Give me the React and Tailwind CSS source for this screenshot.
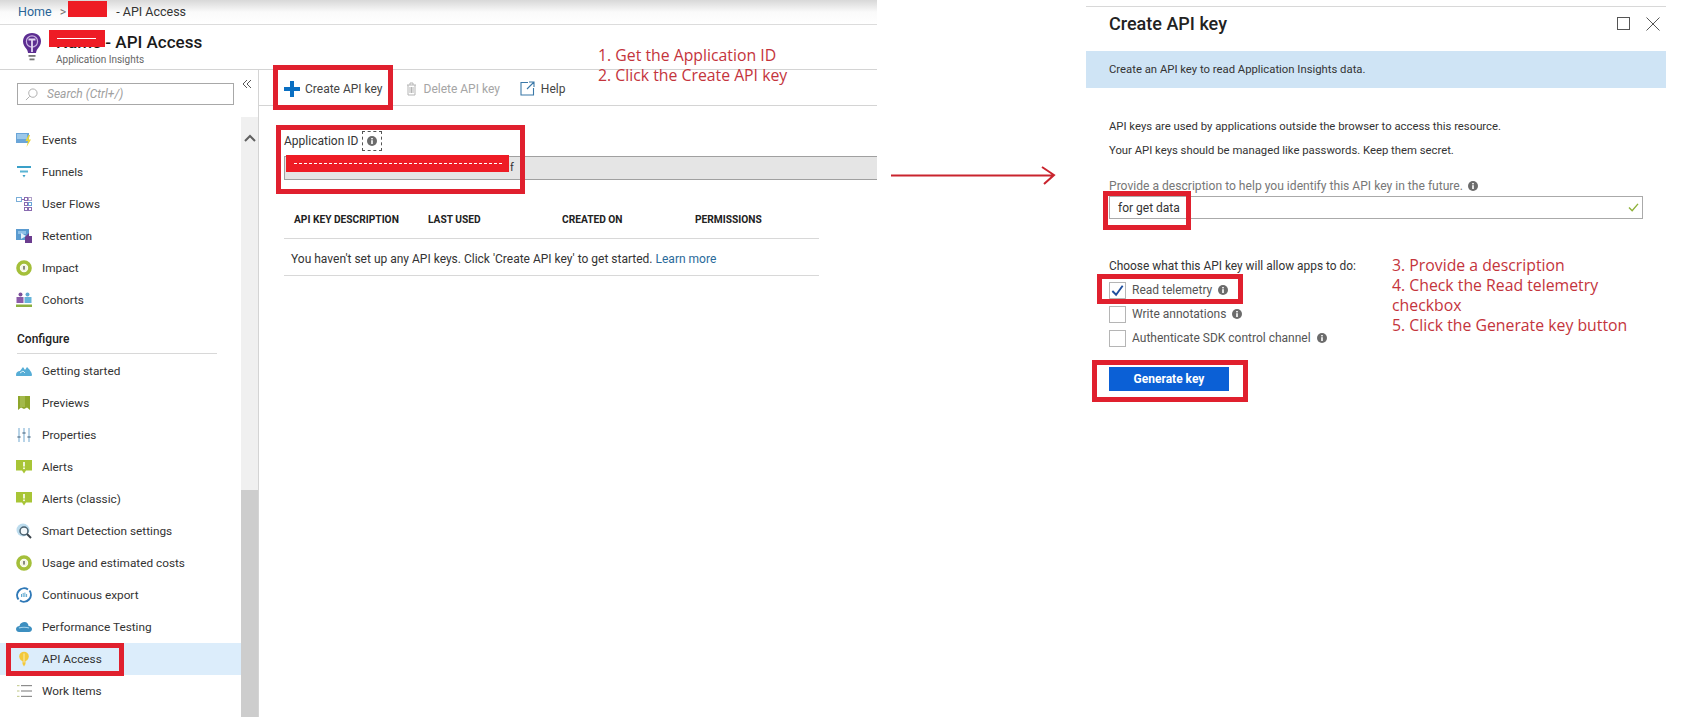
import React from "react";

function Info({ className = "" }) {
  return (
    <svg viewBox="0 0 10 10" className={"w-[10px] h-[10px] shrink-0 " + className}>
      <circle cx="5" cy="5" r="5" fill="#6b6b6b" />
      <rect x="4.2" y="4.2" width="1.6" height="3.8" fill="#fff" />
      <rect x="4.2" y="2" width="1.6" height="1.4" fill="#fff" />
    </svg>
  );
}

const Svg = ({ children }) => (
  <svg viewBox="0 0 16 16" className="w-[16px] h-[16px] shrink-0">{children}</svg>
);

const icons = {
  events: (
    <Svg>
      <rect x="0" y="1" width="13" height="10" fill="#6aa5d8" />
      <rect x="1" y="2" width="10" height="5" fill="#9cc8ea" />
      <path d="M12.5 3 L9.5 9 H12 L10.5 15 L15 7.5 H12.5 L14 3 Z" fill="#e8d33a" />
    </Svg>
  ),
  funnels: (
    <Svg>
      <rect x="1" y="2" width="14" height="2" fill="#3aa0c8" />
      <rect x="4" y="6.5" width="8" height="2" fill="#59b4d4" />
      <path d="M6.5 11 H9.5 L8 13.5 Z" fill="#3aa0c8" />
    </Svg>
  ),
  flows: (
    <Svg>
      <rect x="0.5" y="1.5" width="5" height="4" fill="none" stroke="#7aaed8" />
      <path d="M5.5 3.5 H8" stroke="#8a6bb0" />
      <rect x="8.5" y="1.5" width="3" height="3" fill="none" stroke="#8a6bb0" />
      <rect x="12.5" y="1.5" width="3" height="3" fill="none" stroke="#b0a0c8" />
      <rect x="8.5" y="6.5" width="3" height="3" fill="none" stroke="#8a6bb0" />
      <rect x="12.5" y="6.5" width="3" height="3" fill="none" stroke="#6aa5d8" />
      <rect x="8.5" y="11.5" width="3" height="3" fill="none" stroke="#8a6bb0" />
      <rect x="12.5" y="11.5" width="3" height="3" fill="none" stroke="#8a6bb0" />
    </Svg>
  ),
  retention: (
    <Svg>
      <rect x="0" y="1" width="13" height="11" fill="#5b9bd0" />
      <rect x="2" y="3" width="8" height="3" fill="#8fc0e6" />
      <path d="M5 5 L10 8 L5 11 Z" fill="#e6f2fb" />
      <path d="M9 9 L13 5 V8 H16 V15 H9 Z" fill="#6b3d8f" />
    </Svg>
  ),
  impact: (
    <Svg>
      <circle cx="8" cy="8" r="6" fill="none" stroke="#a4bf3a" strokeWidth="3.6" />
      <circle cx="8" cy="8" r="3.5" fill="#f3f6e2" />
      <rect x="7.4" y="6" width="1.2" height="3.6" fill="#444" />
    </Svg>
  ),
  cohorts: (
    <Svg>
      <circle cx="4.5" cy="2.5" r="2" fill="#7a4f9a" />
      <circle cx="11.5" cy="2.5" r="2" fill="#5fa8d0" />
      <path d="M0.5 5 H7.5 V11 H0.5 Z" fill="#8a5aa8" />
      <path d="M8.5 5 H15.5 V11 H8.5 Z" fill="#66b4da" />
      <rect x="0" y="12.5" width="16" height="2.5" fill="#8cb040" />
    </Svg>
  ),
  started: (
    <Svg>
      <path d="M0 12 C0 9 2 8 4 8 L7 4 L9 7 L11 4 C13 6 16 9 16 12 C16 13 15 13 14 13 H1 C0.5 13 0 13 0 12 Z" fill="#56add6" />
      <path d="M4 10 L7 8 L9 10" fill="none" stroke="#d5edf7" />
    </Svg>
  ),
  previews: (
    <Svg>
      <path d="M2 1 H14 V15 L11 12.5 L8 14 L5 12.5 L2 15 Z" fill="#8ea62b" />
      <rect x="4" y="1" width="5" height="11" fill="#a3b94b" />
    </Svg>
  ),
  properties: (
    <Svg>
      <rect x="2" y="1" width="2" height="14" fill="#b8d4e8" />
      <rect x="7" y="1" width="2" height="14" fill="#b8d4e8" />
      <rect x="12" y="1" width="2" height="14" fill="#b8d4e8" />
      <rect x="1.5" y="9" width="3" height="2" fill="#7f98ad" />
      <rect x="6.5" y="5" width="3" height="2" fill="#7f98ad" />
      <rect x="11.5" y="9" width="3" height="2" fill="#7f98ad" />
    </Svg>
  ),
  alerts: (
    <Svg>
      <path d="M0 1 H16 V11.5 H10 L8 14.5 L6 11.5 H0 Z" fill="#a8c536" />
      <rect x="7.2" y="3" width="1.6" height="4.5" fill="#fff" />
      <rect x="7.2" y="8.5" width="1.6" height="1.6" fill="#fff" />
    </Svg>
  ),
  smart: (
    <Svg>
      <circle cx="7" cy="7" r="6.5" fill="#bcdcee" />
      <circle cx="8" cy="8" r="4" fill="#f4f8fb" stroke="#4b6270" strokeWidth="1.5" />
      <path d="M11 11 L15 15" stroke="#39424a" strokeWidth="2" />
    </Svg>
  ),
  usage: (
    <Svg>
      <circle cx="8" cy="8" r="6" fill="none" stroke="#a4bf3a" strokeWidth="3.6" />
      <circle cx="8" cy="8" r="3.5" fill="#f3f6e2" />
      <rect x="7.4" y="6" width="1.2" height="3.6" fill="#444" />
    </Svg>
  ),
  export: (
    <Svg>
      <path d="M12 2.5 A7 7 0 0 0 2.5 12.5" fill="none" stroke="#2e78b7" strokeWidth="2" />
      <path d="M4 13.5 A7 7 0 0 0 13.5 3.5" fill="none" stroke="#2e78b7" strokeWidth="2" />
      <path d="M5.5 7 V10 M7.2 6 V10 M8.9 5.5 V10 M10.6 7 V10" stroke="#5fa8d0" strokeWidth="1" />
    </Svg>
  ),
  perf: (
    <Svg>
      <path d="M0 10 C0 8 2 7 3.5 7 C4 4 6.5 3 8.5 3 C11 3 12.5 5 12.5 7 C14.5 7 16 8.5 16 10 C16 12 14.5 13 13 13 H3 C1.5 13 0 12 0 10 Z" fill="#3d8fc0" />
      <path d="M3 9 C5 8 11 8 13 9" fill="none" stroke="#a9d6ee" strokeWidth="1.2" />
    </Svg>
  ),
  api: (
    <Svg>
      <circle cx="8" cy="5.5" r="4.8" fill="#f3c93a" />
      <path d="M6.5 9 H9.5 V13 L8 15.5 L6.5 13 Z" fill="#f3c93a" />
      <rect x="7.4" y="2.5" width="1.2" height="9" fill="#fbe79a" />
    </Svg>
  ),
  work: (
    <Svg>
      <rect x="5" y="2" width="11" height="1.2" fill="#8d8d8d" />
      <rect x="5" y="7.4" width="11" height="1.2" fill="#8d8d8d" />
      <rect x="5" y="12.8" width="11" height="1.2" fill="#8d8d8d" />
      <rect x="1" y="2" width="2.5" height="1.2" fill="#c9cf9a" />
      <rect x="1" y="7.4" width="2.5" height="1.2" fill="#c9cf9a" />
      <rect x="1" y="12.8" width="2.5" height="1.2" fill="#c9cf9a" />
    </Svg>
  ),
};

function NavRow({ icon, label, active }) {
  return (
    <div className={"h-[32px] flex items-center pl-[16px] gap-[10px] text-[11.8px] text-[#333] " + (active ? "bg-[#dcedfb]" : "")}>
      {icons[icon]}
      <span className="pt-[1px]">{label}</span>
    </div>
  );
}

function Check({ checked, label }) {
  return (
    <div className="h-[24px] flex items-center text-[12px] text-[#555]">
      <div className="w-[17px] h-[17px] border border-[#b5b5b5] bg-white flex items-center justify-center mr-[6px]">
        {checked && (
          <svg viewBox="0 0 16 16" className="w-[15px] h-[15px]">
            <path d="M2.5 8.5 L6.5 12.5 L13.5 3" fill="none" stroke="#1f4f9e" strokeWidth="2" />
          </svg>
        )}
      </div>
      <span>{label}</span>
      <Info className="ml-[6px]" />
    </div>
  );
}

const Box = ({ className }) => (
  <div className={"absolute border-[5px] border-[#e0202e] " + className} />
);

const Note = ({ className, children }) => (
  <div className={"absolute font-['Open_Sans',sans-serif] text-[15.8px] leading-[20px] whitespace-nowrap text-[#c4343c] " + className}>
    {children}
  </div>
);

export default function App() {
  return (
    <div className="relative w-[1700px] h-[717px] overflow-hidden bg-white flex font-['Roboto',sans-serif] text-[#333]">
      {/* Left blade */}
      <div className="w-[877px] h-[717px] flex flex-col shrink-0">
        <div className="h-[25px] border-b border-[#dcdcdc] bg-gradient-to-b from-[#d8d8d8] via-[#fafafa] via-50% to-white flex items-center pl-[18px] text-[12.5px]">
          <span className="text-[#2a6496]">Home</span>
          <span className="ml-[8px] text-[#777]">&gt;</span>
          <span className="ml-[50px] text-[#333]">- API Access</span>
        </div>
        <div className="h-[45px] border-b border-[#d4d4d4] flex items-center pl-[22px]">
          <svg viewBox="0 0 20 30" className="w-[20px] h-[30px] shrink-0">
            <path d="M10 1 C4 1 1 5 1 9.5 C1 13 3 15 4.5 17 C5.5 18.5 6 20 6 21 H14 C14 20 14.5 18.5 15.5 17 C17 15 19 13 19 9.5 C19 5 16 1 10 1 Z" fill="#5c2d91" />
            <circle cx="10" cy="9.5" r="5.6" fill="none" stroke="#c9b4e2" strokeWidth="1.2" />
            <path d="M6.5 7.5 H13.5 M10 7.5 V20" stroke="#e4d8f2" strokeWidth="1.8" fill="none" />
            <rect x="6.5" y="23" width="7" height="1.8" fill="#777" />
            <rect x="7.5" y="26.5" width="5" height="1.8" fill="#777" />
          </svg>
          <div className="ml-[14px] flex flex-col">
            <div className="text-[17px] leading-[24px] font-medium text-[#1a1a1a] whitespace-nowrap mt-[2px]">Name - API Access</div>
            <div className="text-[10px] leading-[12px] text-[#666]">Application Insights</div>
          </div>
        </div>
        <div className="flex-1 flex min-h-0">
          {/* Sidebar */}
          <div className="w-[259px] shrink-0 border-r border-[#d4d4d4] flex">
            <div className="w-[241px] shrink-0">
              <div className="h-[54px] pt-[13px] pl-[17px]">
                <div className="w-[217px] h-[22px] border border-[#a8a8a8] flex items-center pl-[7px] text-[12px] italic text-[#a0a0a0]">
                  <svg viewBox="0 0 14 14" className="w-[13px] h-[13px] mr-[9px]">
                    <circle cx="8.5" cy="5.5" r="4.5" fill="none" stroke="#aaa" strokeWidth="1" />
                    <path d="M5 9 L1 13" stroke="#aaa" strokeWidth="1" />
                  </svg>
                  Search (Ctrl+/)
                </div>
              </div>
              <NavRow icon="events" label="Events" />
              <NavRow icon="funnels" label="Funnels" />
              <NavRow icon="flows" label="User Flows" />
              <NavRow icon="retention" label="Retention" />
              <NavRow icon="impact" label="Impact" />
              <NavRow icon="cohorts" label="Cohorts" />
              <div className="h-[38px] ml-[17px] w-[200px] border-b border-[#d8d8d8] flex items-end pb-[5px] text-[12px] font-medium text-[#222]">Configure</div>
              <div className="h-[1px]" />
              <NavRow icon="started" label="Getting started" />
              <NavRow icon="previews" label="Previews" />
              <NavRow icon="properties" label="Properties" />
              <NavRow icon="alerts" label="Alerts" />
              <NavRow icon="alerts" label="Alerts (classic)" />
              <NavRow icon="smart" label="Smart Detection settings" />
              <NavRow icon="usage" label="Usage and estimated costs" />
              <NavRow icon="export" label="Continuous export" />
              <NavRow icon="perf" label="Performance Testing" />
              <NavRow icon="api" label="API Access" active />
              <NavRow icon="work" label="Work Items" />
            </div>
            <div className="w-[17px] shrink-0 flex flex-col">
              <div className="h-[47px] pt-[9px] pl-[1px]">
                <svg viewBox="0 0 10 10" className="w-[10px] h-[10px]">
                  <path d="M5 1 L1 5 L5 9 M9 1 L5 5 L9 9" fill="none" stroke="#555" strokeWidth="1" />
                </svg>
              </div>
              <div className="h-[373px] bg-[#f0f0f0] flex justify-center items-start pt-[17px]">
                <svg viewBox="0 0 12 8" className="w-[12px] h-[8px]">
                  <path d="M1 7 L6 2 L11 7" fill="none" stroke="#606060" strokeWidth="2" />
                </svg>
              </div>
              <div className="flex-1 bg-[#cdcdcd]" />
            </div>
          </div>
          {/* Main */}
          <div className="flex-1 min-w-0">
            <div className="h-[36px] pt-[2px] border-b border-[#d4d4d4] flex items-center pl-[25px] text-[12px]">
              <svg viewBox="0 0 16 16" className="w-[16px] h-[16px]">
                <path d="M6 0 H10 V6 H16 V10 H10 V16 H6 V10 H0 V6 H6 Z" fill="#0a6fc2" />
              </svg>
              <span className="ml-[5px] text-[#444]">Create API key</span>
              <svg viewBox="0 0 11 14" className="w-[11px] h-[14px] ml-[23px]">
                <path d="M1 3 H10 M4 3 V1 H7 V3 M2 3 V13 H9 V3 M4 5 V11 M5.5 5 V11 M7 5 V11" fill="none" stroke="#b5b5b5" strokeWidth="1" />
              </svg>
              <span className="ml-[7px] text-[#a5a5a5]">Delete API key</span>
              <svg viewBox="0 0 15 15" className="w-[15px] h-[15px] ml-[20px]">
                <path d="M8 1.5 H1 V14 H13.5 V7 M14 1 L7 8 M9 1 H14 V6" fill="none" stroke="#3a78a8" strokeWidth="1.1" />
              </svg>
              <span className="ml-[6px] text-[#444]">Help</span>
            </div>
            <div className="pl-[25px]">
              <div className="h-[50px] pt-[19px] flex items-center text-[12px] text-[#333]">
                <span>Application ID</span>
                <div className="ml-[4px] w-[20px] h-[20px] border border-dashed border-[#555] flex items-center justify-center">
                  <Info />
                </div>
              </div>
              <div className="h-[24px] bg-[#e5e5e5] border-y border-[#a0a0a0] border-l flex items-center pl-[225px] text-[11px] text-[#333]">f</div>
              <div className="w-[535px] mt-[21px]">
                <div className="h-[38px] border-b border-[#d8d8d8] grid grid-cols-[134px_134px_133px_1fr] pl-[10px] items-center text-[10.2px] font-bold text-[#222]">
                  <span>API KEY DESCRIPTION</span>
                  <span>LAST USED</span>
                  <span>CREATED ON</span>
                  <span>PERMISSIONS</span>
                </div>
                <div className="h-[37px] pt-[4px] border-b border-[#d8d8d8] flex items-center pl-[7px] text-[12px] text-[#333]">
                  You haven't set up any API keys. Click 'Create API key' to get started.
                  <span className="ml-[3px] text-[#2a6a9a]">Learn more</span>
                </div>
              </div>
            </div>
          </div>
        </div>
      </div>

      {/* Right blade */}
      <div className="ml-[209px] mt-[6px] w-[580px] h-[500px] border-t border-[#d8d8d8] shrink-0">
        <div className="h-[44px] pb-[11px] flex items-center justify-between pl-[23px] pr-[6px]">
          <span className="text-[18px] font-medium text-[#222]">Create API key</span>
          <div className="flex items-center gap-[16px]">
            <div className="w-[13px] h-[13px] border border-[#555]" />
            <svg viewBox="0 0 14 14" className="w-[14px] h-[14px]">
              <path d="M0.5 0.5 L13.5 13.5 M13.5 0.5 L0.5 13.5" stroke="#555" strokeWidth="1" />
            </svg>
          </div>
        </div>
        <div className="h-[37px] pt-[2px] bg-[#cfe4f5] flex items-center pl-[23px] text-[11.3px] text-[#333]">
          Create an API key to read Application Insights data.
        </div>
        <div className="pl-[23px]">
          <div className="mt-[27px] text-[11.3px] leading-[24px] text-[#333]">
            <div>API keys are used by applications outside the browser to access this resource.</div>
            <div>Your API keys should be managed like passwords. Keep them secret.</div>
          </div>
          <div className="mt-[13px] h-[20px] flex items-center text-[12.1px] text-[#777]">
            Provide a description to help you identify this API key in the future.
            <Info className="ml-[5px]" />
          </div>
          <div className="w-[534px] h-[23px] border border-[#aaa] flex items-center justify-between pl-[8px] pr-[3px] text-[12px] text-[#333]">
            <span>for get data</span>
            <svg viewBox="0 0 12 10" className="w-[11px] h-[9px]">
              <path d="M1 5 L4.5 8.5 L11 1" fill="none" stroke="#8fb23a" strokeWidth="1.6" />
            </svg>
          </div>
          <div className="mt-[38px] h-[20px] flex items-center text-[11.9px] text-[#333]">
            Choose what this API key will allow apps to do:
          </div>
          <div className="mt-[1px]">
            <Check checked label="Read telemetry" />
            <Check label="Write annotations" />
            <Check label="Authenticate SDK control channel" />
          </div>
          <div className="mt-[17px] w-[120px] h-[24px] bg-[#0b60d6] flex items-center justify-center text-[12px] font-bold text-white">
            Generate key
          </div>
        </div>
      </div>

      {/* Annotation layer */}
      <div className="absolute left-[68px] top-[1px] w-[39px] h-[16px] bg-[#ee1c25]" />
      <div className="absolute left-[49px] top-[30px] w-[56px] h-[17px] bg-[#ee1c25]" />
      <div className="absolute left-[57px] top-[38px] w-[39px] h-px bg-white" />
      <div className="absolute left-[286px] top-[155px] w-[223px] h-[17px] bg-[#ee1c25]" />
      <div className="absolute left-[294px] top-[163px] w-[208px] h-px border-t border-dashed border-white" />
      <Box className="left-[273px] top-[65px] w-[120px] h-[45px]" />
      <Box className="left-[276px] top-[125px] w-[249px] h-[69px]" />
      <Box className="left-[6px] top-[643px] w-[118px] h-[33px]" />
      <Box className="left-[1103px] top-[191px] w-[88px] h-[39px]" />
      <Box className="left-[1097px] top-[274px] w-[146px] h-[30px]" />
      <Box className="left-[1092px] top-[360px] w-[156px] h-[42px]" />

      <Note className="left-[598px] top-[45px]">1. Get the Application ID</Note>
      <Note className="left-[598px] top-[65px]">2. Click the Create API key</Note>
      <Note className="left-[1392px] top-[255px]">3. Provide a description</Note>
      <Note className="left-[1392px] top-[275px]">4. Check the Read telemetry</Note>
      <Note className="left-[1392px] top-[295px]">checkbox</Note>
      <Note className="left-[1392px] top-[315px]">5. Click the Generate key button</Note>

      <svg viewBox="0 0 170 24" className="absolute left-[889px] top-[163px] w-[170px] h-[24px]">
        <path d="M2 12.5 H165 M153 4 L165 12 L155 21" fill="none" stroke="#c9242e" strokeWidth="2" />
      </svg>
    </div>
  );
}
